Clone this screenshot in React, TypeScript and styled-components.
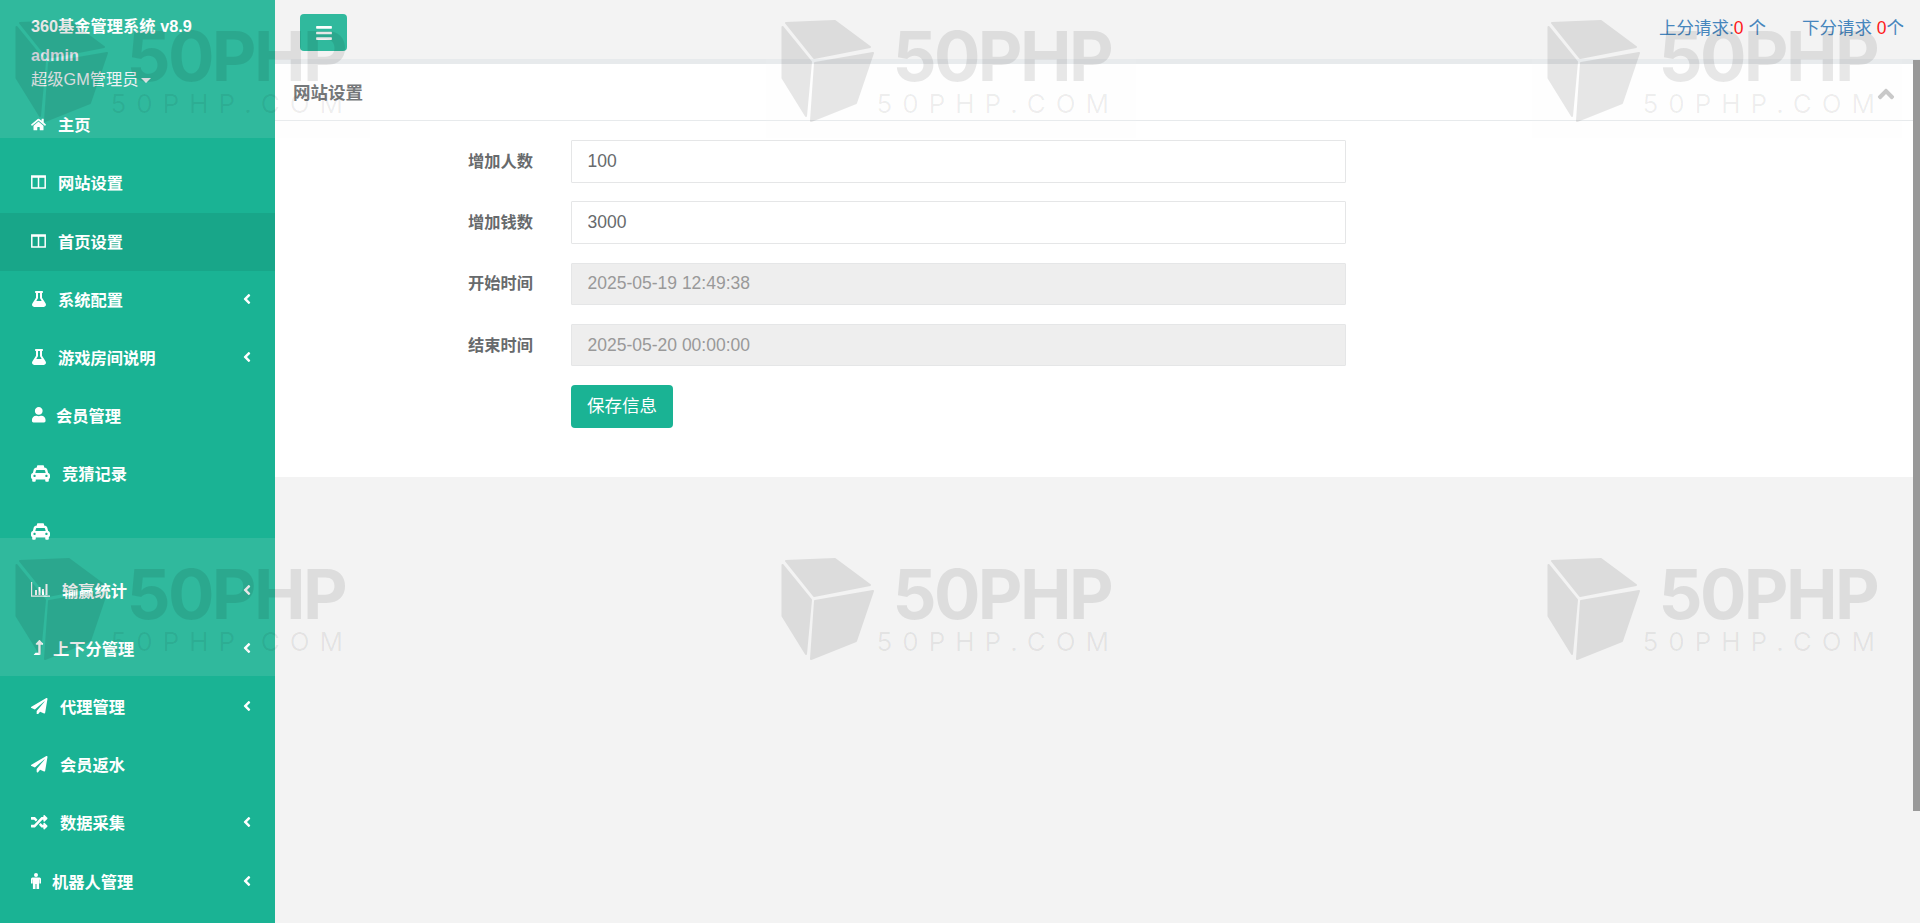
import React from 'react'
import styled, {createGlobalStyle} from 'styled-components'
import {FaHome, FaFlask, FaUser, FaTaxi, FaLevelUpAlt, FaPaperPlane, FaRandom, FaAngleLeft, FaAngleUp, FaBars} from 'react-icons/fa'

const uiFont = `"Liberation Sans", "Noto Sans CJK SC", sans-serif`

const GlobalStyle = createGlobalStyle`
  html, body {
    margin: 0;
    height: 100%;
    overflow: hidden;
    background: #f3f3f3;
  }
  body {
    font-family: ${uiFont};
  }
`

const Page = styled.div`
  position: relative;
  display: flex;
  height: 923px;
  overflow: hidden;
`

const Sidebar = styled.aside`
  flex: 0 0 275px;
  background: #1ab394;
  color: #fff;
`

const Profile = styled.div`
  height: 96.6px;
  box-sizing: border-box;
  padding: 15px 0 0 31px;
`

const Brand = styled.div`
  font-size: 16.25px;
  font-weight: 700;
  line-height: 22px;
`

const UserName = styled.div`
  margin-top: 7px;
  font-size: 16.25px;
  font-weight: 700;
  line-height: 22px;
  color: #dfe4ed;
`

const Role = styled.div`
  margin-top: 1px;
  font-size: 16.25px;
  line-height: 24px;
  color: #eef2f5;
  &::after {
    content: '';
    display: inline-block;
    margin-left: 3px;
    vertical-align: 2px;
    border-top: 5px solid #eef2f5;
    border-left: 5px solid transparent;
    border-right: 5px solid transparent;
  }
`

const Menu = styled.nav`
  display: flex;
  flex-direction: column;
`

const MenuItem = styled.a<{$active?: boolean}>`
  display: flex;
  align-items: center;
  height: 58.2px;
  box-sizing: border-box;
  gap: 12px;
  padding: 0 25px 3px 31px;
  font-size: 16.25px;
  font-weight: 700;
  color: #fff;
  background: ${({$active}) => ($active ? '#18a689' : 'transparent')};
`

const MenuIcon = styled.span<{$w: number; $size: number}>`
  display: flex;
  align-items: center;
  justify-content: flex-start;
  flex: 0 0 ${({$w}) => $w}px;
  width: ${({$w}) => $w}px;
  font-size: ${({$size}) => $size}px;
  svg {
    flex: none;
  }
`

const Chevron = styled(FaAngleLeft)`
  margin-left: auto;
  margin-right: -5px;
  font-size: 16px;
`

const Main = styled.main`
  flex: 1;
  min-width: 0;
`

const TopBar = styled.header`
  display: flex;
  align-items: flex-start;
  justify-content: space-between;
  height: 64px;
  box-sizing: border-box;
  padding: 14px 16px 0 25px;
  border-bottom: 5px solid #e7eaec;
`

const ToggleButton = styled.button`
  display: flex;
  align-items: center;
  justify-content: center;
  width: 47px;
  height: 37px;
  padding: 0;
  border: 0;
  border-radius: 4px;
  background: #1ab394;
  color: #fff;
  font-size: 18px;
`

const Requests = styled.div`
  display: flex;
  gap: 36px;
  font-size: 17.5px;
  color: #337ab7;
`

const Count = styled.span`
  color: #ff0000;
`

const Panel = styled.section`
  height: 413px;
  box-sizing: border-box;
  background: #fff;
`

const PanelTitle = styled.div`
  display: flex;
  align-items: center;
  justify-content: space-between;
  height: 57px;
  box-sizing: border-box;
  padding: 0 21px 2px 18px;
  border-bottom: 1px solid #e7eaec;
  font-size: 17.5px;
  font-weight: 700;
  color: #676a6c;
`

const Collapse = styled(FaAngleUp)`
  font-size: 26px;
  color: #c4c4c4;
  margin-top: 6px;
`

const Form = styled.form`
  display: flex;
  flex-direction: column;
  gap: 18.75px;
  padding: 19px 0 0 20px;
`

const Row = styled.div`
  display: grid;
  grid-template-columns: 238px 775px;
  column-gap: 38px;
  align-items: center;
`

const Label = styled.label`
  padding-bottom: 3px;
  text-align: right;
  font-size: 16.25px;
  font-weight: 700;
  color: #676a6c;
`

const Input = styled.input`
  grid-column: 2;
  height: 42.5px;
  box-sizing: border-box;
  padding: 0 15.5px;
  border: 1px solid #e5e6e7;
  border-radius: 1px;
  font-family: ${uiFont};
  font-size: 17.5px;
  color: #676a6c;
  &:disabled {
    background: #eeeeee;
    color: #999;
    -webkit-text-fill-color: #999;
    opacity: 1;
  }
`

const SaveButton = styled.button`
  grid-column: 2;
  justify-self: start;
  width: 102px;
  height: 42.5px;
  padding: 0 0 4px;
  border: 0;
  border-radius: 4px;
  background: #1ab394;
  color: #fff;
  font-family: ${uiFont};
  font-size: 17.5px;
`

const ScrollThumb = styled.div`
  position: absolute;
  top: 60px;
  right: 0;
  width: 7px;
  height: 751px;
  background: #999;
`

// the 50PHP stamp laid over the whole page
const Watermark = styled.div`
  position: absolute;
  inset: 0;
  display: grid;
  grid-template-columns: repeat(3, 766px);
  grid-auto-rows: 538px;
  pointer-events: none;
`

const Tile = styled.div`
  display: flex;
  width: 370px;
  height: 138px;
  background: rgba(250, 250, 250, 0.1);
`

const Cube = styled.svg`
  flex: 0 0 114px;
  width: 114px;
  height: 138px;
`

const MarkText = styled.div`
  display: flex;
  flex-direction: column;
  align-items: flex-end;
  width: 231px;
  font-family: Inter, "Liberation Sans", sans-serif;
`

const MarkTitle = styled.div`
  margin-top: 21px;
  font-size: 69px;
  font-weight: 700;
  line-height: 70px;
  letter-spacing: -2.6px;
  color: rgba(0, 0, 0, 0.09);
`

const MarkSite = styled.div`
  margin-top: -2px;
  margin-right: -8px;
  font-size: 26px;
  font-weight: 400;
  line-height: 30px;
  letter-spacing: 10px;
  color: rgba(0, 0, 0, 0.065);
`

const ColumnsIcon = () => (
  <svg width="15" height="14" viewBox="0 0 15 14">
    <path d="M0.8 1h13.4v12H0.8zM7.5 1v12" fill="none" stroke="currentColor" strokeWidth="1.5"/>
    <path d="M1 1h13v1.8H1z" fill="currentColor"/>
  </svg>
)

const BarsIcon = () => (
  <svg width="19" height="15" viewBox="0 0 19 15">
    <path d="M0.6 0v14.2H19" fill="none" stroke="currentColor" strokeWidth="1.2"/>
    <path d="M4 8h2v5H4zM7.5 5h2v8h-2zM11 7h2v6h-2zM14.5 2h2v11h-2z" fill="currentColor"/>
  </svg>
)

// the package's male figure is much thinner than this one
const MaleIcon = () => (
  <svg width="10" height="16" viewBox="0 0 10 16">
    <circle cx="5" cy="2" r="2" fill="currentColor"/>
    <path d="M1.5 4.5h7A1.5 1.5 0 0 1 10 6v4.4H8.4V6.6h-.3V16H5.5v-5h-1v5H1.9V6.6h-.3v3.8H0V6a1.5 1.5 0 0 1 1.5-1.5z" fill="currentColor"/>
  </svg>
)

const menu = [
    {label: '主页', icon: <FaHome/>, w: 15, size: 15},
    {label: '网站设置', icon: <ColumnsIcon/>, w: 15, size: 15},
    {label: '首页设置', icon: <ColumnsIcon/>, w: 15, size: 15, active: true},
    {label: '系统配置', icon: <FaFlask/>, w: 15, size: 16, sub: true},
    {label: '游戏房间说明', icon: <FaFlask/>, w: 15, size: 16, sub: true},
    {label: '会员管理', icon: <FaUser/>, w: 13, size: 15.5},
    {label: '竞猜记录', icon: <FaTaxi/>, w: 19, size: 19},
    {label: '', icon: <FaTaxi/>, w: 19, size: 19},
    {label: '输赢统计', icon: <BarsIcon/>, w: 19, size: 15, sub: true},
    {label: '上下分管理', icon: <FaLevelUpAlt/>, w: 10, size: 15, sub: true},
    {label: '代理管理', icon: <FaPaperPlane/>, w: 17, size: 16.5, sub: true},
    {label: '会员返水', icon: <FaPaperPlane/>, w: 17, size: 16.5},
    {label: '数据采集', icon: <FaRandom/>, w: 17, size: 16.5, sub: true},
    {label: '机器人管理', icon: <MaleIcon/>, w: 9, size: 16, sub: true},
]

const fields = [
    {label: '增加人数', value: '100'},
    {label: '增加钱数', value: '3000'},
    {label: '开始时间', value: '2025-05-19 12:49:38', disabled: true},
    {label: '结束时间', value: '2025-05-20 00:00:00', disabled: true},
]

const App = () => {
    return (
        <Page>
            <GlobalStyle/>
            <Sidebar>
                <Profile>
                    <Brand>360基金管理系统 v8.9</Brand>
                    <UserName>admin</UserName>
                    <Role>超级GM管理员</Role>
                </Profile>
                <Menu>
                    {menu.map((item, index) => (
                        <MenuItem key={index} $active={item.active}>
                            <MenuIcon $w={item.w} $size={item.size}>{item.icon}</MenuIcon>
                            {item.label && <span>{item.label}</span>}
                            {item.sub && <Chevron/>}
                        </MenuItem>
                    ))}
                </Menu>
            </Sidebar>
            <Main>
                <TopBar>
                    <ToggleButton><FaBars/></ToggleButton>
                    <Requests>
                        <span>上分请求:<Count>0</Count> 个</span>
                        <span>下分请求 <Count>0</Count>个</span>
                    </Requests>
                </TopBar>
                <Panel>
                    <PanelTitle>
                        <span>网站设置</span>
                        <Collapse/>
                    </PanelTitle>
                    <Form>
                        {fields.map((field) => (
                            <Row key={field.label}>
                                <Label>{field.label}</Label>
                                <Input defaultValue={field.value} disabled={field.disabled}/>
                            </Row>
                        ))}
                        <Row>
                            <SaveButton type="button">保存信息</SaveButton>
                        </Row>
                    </Form>
                </Panel>
            </Main>
            <ScrollThumb/>
            <Watermark>
                {[0, 1, 2, 3, 4, 5].map((n) => (
                    <Tile key={n}>
                        <Cube viewBox="0 0 114 138">
                            <g fill="#000" stroke="#000" strokeWidth="2" strokeLinejoin="round" opacity="0.09">
                                <path d="M20 23 69 21 104 47 48 58Z"/>
                                <path d="M16.5 27 45 62 40 116 16.5 78Z"/>
                                <path d="M49 63 107 53 90 103 45 121Z"/>
                            </g>
                        </Cube>
                        <MarkText>
                            <MarkTitle>50PHP</MarkTitle>
                            <MarkSite>50PHP.COM</MarkSite>
                        </MarkText>
                    </Tile>
                ))}
            </Watermark>
        </Page>
    )
}

export default App
